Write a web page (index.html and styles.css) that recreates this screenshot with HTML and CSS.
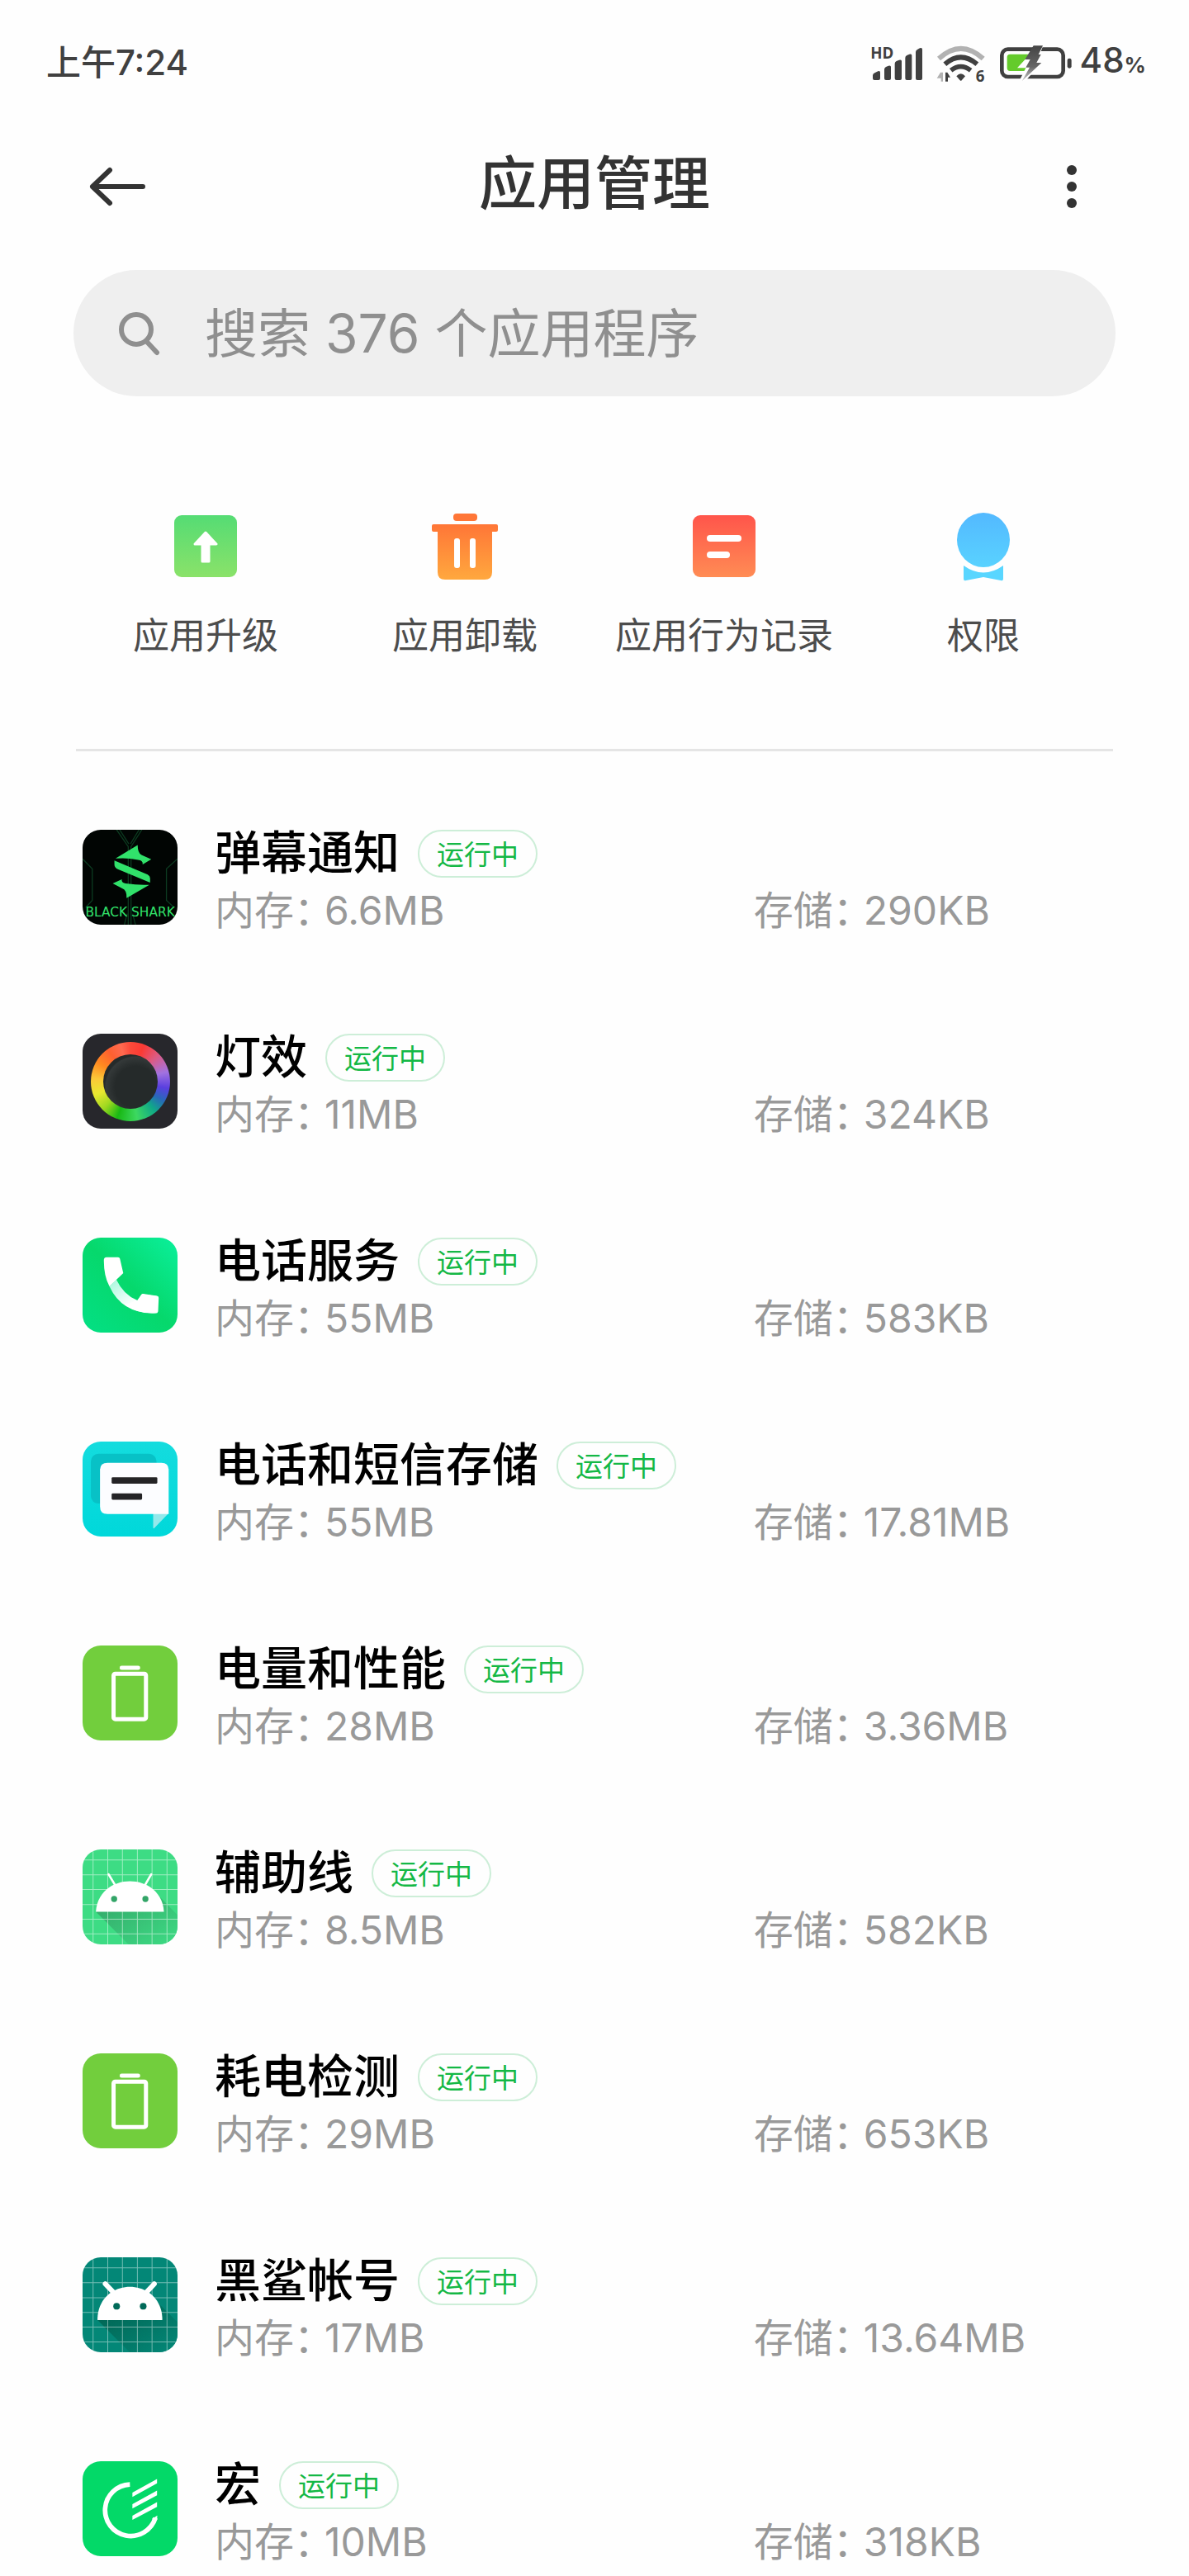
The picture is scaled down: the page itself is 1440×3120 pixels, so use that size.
FILE: index.html
```html
<!DOCTYPE html>
<html lang="zh-CN">
<head>
<meta charset="utf-8">
<meta name="viewport" content="width=device-width, initial-scale=1">
<title>应用管理</title>
<link rel="stylesheet" href="styles.css">
</head>
<body>
<div class="screen">
  <div class="status">
    <span class="clock">上午7:24</span>
    <div class="status-icons">
      <svg class="signal" viewBox="156 93 192 144" aria-hidden="true">
        <text x="157" y="150" font-size="56" font-weight="700" fill="#404040">HD</text>
        <g fill="#404040">
          <path d="M165 211 Q165 205 172 202 L184 196 Q192 193 192 200 V222 Q192 228 186 228 H171 Q165 228 165 222Z"/>
          <path d="M207 189 Q207 183 213 180 L222 176 Q231 173 231 181 V222 Q231 228 225 228 H213 Q207 228 207 222Z"/>
          <path d="M245 168 Q245 162 251 159 L261 155 Q270 152 270 160 V222 Q270 228 264 228 H251 Q245 228 245 222Z"/>
          <path d="M283 147 Q283 141 289 138 L298 134 Q307 131 307 139 V222 Q307 228 301 228 H289 Q283 228 283 222Z"/>
          <path d="M321 126 Q321 120 327 117 L336 112 Q345 109 345 117 V222 Q345 228 339 228 H327 Q321 228 321 222Z"/>
        </g>
      </svg>
      <svg class="wifi" viewBox="393 93 180 144" aria-hidden="true">
        <path d="M402 150 Q482 77 563 150" fill="none" stroke="#b2b2b2" stroke-width="18"/>
        <path d="M424 170 Q482 120 541 170" fill="none" stroke="#404040" stroke-width="18"/>
        <path d="M446 193 Q482 165 518 193" fill="none" stroke="#404040" stroke-width="17"/>
        <path d="M466 214 Q482 196 498 214 L485 229 Q482 232 479 229Z" fill="#404040"/>
        <path d="M408 200 h9 v33 h-7 v-12 h-15Z" fill="#b2b2b2"/>
        <path d="M426 233 v-33 h7 l11 18 h-9 v15Z" fill="#404040"/>
        <text x="536" y="234" font-size="56" font-weight="700" fill="#404040">6</text>
      </svg>
      <svg class="battery" viewBox="624 93 270 144" aria-hidden="true">
        <defs><linearGradient id="bolt" x1="0" y1="0" x2="0" y2="1"><stop offset="0" stop-color="#444"/><stop offset=".6" stop-color="#666"/><stop offset="1" stop-color="#ccc"/></linearGradient></defs>
        <rect x="634" y="116" width="223" height="100" rx="22" fill="none" stroke="#404040" stroke-width="14"/>
        <path d="M664 134 H736 L690 184 H724 L716 195 H664 Q653 195 653 184 V145 Q653 134 664 134Z" fill="#64cb2b"/>
        <path d="M764 100 L784 103 772 134 779 137 766 162 780 164 722 228 708 232 700 226Z" fill="#fff"/>
        <path d="M749 103 H783 L767 135 H776 L760 165 H778 L707 232 L735 182 H721 L737 153 H718Z" fill="url(#bolt)"/>
        <rect x="872" y="149" width="15" height="36" rx="7" fill="#404040"/>
      </svg>
      <span class="charge">48<small>%</small></span>
    </div>
  </div>

  <header class="topbar">
    <button class="icon-btn" type="button" aria-label="返回">
      <svg class="arrow" viewBox="0 0 68 48"><path d="M25 4 L4 24 L25 44 M4 24 H65" fill="none" stroke="#333" stroke-width="6" stroke-linecap="round" stroke-linejoin="round"/></svg>
    </button>
    <h1>应用管理</h1>
    <button class="icon-btn" type="button" aria-label="更多">
      <svg class="dots" viewBox="0 0 12 52" fill="#333"><circle cx="6" cy="6" r="6"/><circle cx="6" cy="26" r="6"/><circle cx="6" cy="46" r="6"/></svg>
    </button>
  </header>

  <label class="search">
    <svg viewBox="0 0 51 54" aria-hidden="true"><circle cx="22" cy="22" r="18" fill="none" stroke="#8f8f8f" stroke-width="6"/><path d="M34 36 L47 50" stroke="#8f8f8f" stroke-width="6" stroke-linecap="round"/></svg>
    <input type="search" placeholder="搜索 376 个应用程序" aria-label="搜索应用程序">
  </label>

  <nav class="actions">
    <button type="button">
      <svg viewBox="0 0 100 100" aria-hidden="true">
        <defs><linearGradient id="up" x1="0" y1="0" x2="0" y2="1"><stop offset="0" stop-color="#55dc74"/><stop offset="1" stop-color="#8ae269"/></linearGradient></defs>
        <rect x="12" y="13" width="76" height="75" rx="9" fill="url(#up)"/>
        <path d="M50 34 L63 48 H54 V69 H46 V48 H37Z" fill="#fff" stroke="#fff" stroke-width="3" stroke-linejoin="round"/>
      </svg>
      应用升级
    </button>
    <button type="button">
      <svg viewBox="0 0 100 100" aria-hidden="true">
        <defs><linearGradient id="bin" x1="0" y1="0" x2="0" y2="1"><stop offset="0" stop-color="#ff7637"/><stop offset="1" stop-color="#ffa83e"/></linearGradient></defs>
        <rect x="36" y="11" width="29" height="9" rx="4" fill="#ff7637"/>
        <path d="M12 24 H88 Q90 24 90 26 V31 Q90 33 88 33 H83 V82 Q83 91 74 91 H26 Q17 91 17 82 V33 H12 Q10 33 10 31 V26 Q10 24 12 24Z" fill="url(#bin)"/>
        <rect x="37" y="41" width="7" height="36" rx="3" fill="#fff"/><rect x="56" y="41" width="7" height="36" rx="3" fill="#fff"/>
      </svg>
      应用卸载
    </button>
    <button type="button">
      <svg viewBox="0 0 100 100" aria-hidden="true">
        <defs><linearGradient id="log" x1="0" y1="0" x2="0" y2="1"><stop offset="0" stop-color="#ff554b"/><stop offset="1" stop-color="#ff8c54"/></linearGradient></defs>
        <rect x="12" y="13" width="76" height="75" rx="9" fill="url(#log)"/>
        <rect x="29" y="37" width="42" height="8" rx="4" fill="#fff"/><rect x="29" y="57" width="28" height="8" rx="4" fill="#fff"/>
      </svg>
      应用行为记录
    </button>
    <button type="button">
      <svg viewBox="0 0 100 100" aria-hidden="true">
        <defs><linearGradient id="perm" x1="0" y1="0" x2="0" y2="1"><stop offset="0" stop-color="#53b9ff"/><stop offset="1" stop-color="#59d2ff"/></linearGradient></defs>
        <ellipse cx="50" cy="43" rx="32" ry="33" fill="url(#perm)"/>
        <path d="M26 74 Q50 91 74 74 V90 Q74 93 71 92 L50 88 L29 92 Q26 93 26 90Z" fill="#59d6ff"/>
      </svg>
      权限
    </button>
  </nav>

  <ul class="apps">
    <li>
      <svg class="app-icon" viewBox="29 47 343 343" aria-hidden="true">
        <rect x="29" y="47" width="343" height="343" fill="#010503"/>
        <g fill="none" stroke="#0c3a20" stroke-width="4"><path d="M152 47 L194 108 V390 M243 47 L204 108 V390 M29 152 L64 188 V302 L40 328 M372 152 L332 188 V302 L360 328 M163 47 L196 98 M233 47 L202 98 M180 390 L190 350 M220 390 L210 350"/></g>
        <path d="M148 151 L228 102 Q228 131 242 138 L277 154 L246 172 Q248 158 230 156 Q190 147 148 151Z M144 158 L264 209 Q273 214 273 222 V238 L158 190 Q144 184 144 172Z M270 246 L188 294 Q190 266 172 259 L138 241 L171 226 Q168 238 184 241 Q230 248 270 246Z" fill="#31e26b"/>
        <text class="brand" x="201" y="359" font-size="46" text-anchor="middle" fill="#31e26b">BLACK SHARK</text>
      </svg>
      <div class="info">
        <div class="title"><h2>弹幕通知</h2><span class="badge">运行中</span></div>
        <p><span class="key">内存：</span><span class="value">6.6MB</span></p><p><span class="key">存储：</span><span class="value">290KB</span></p>
      </div>
    </li>
    <li>
      <div class="app-icon lamp"><div class="ring"><div class="knob"></div></div></div>
      <div class="info">
        <div class="title"><h2>灯效</h2><span class="badge">运行中</span></div>
        <p><span class="key">内存：</span><span class="value">11MB</span></p><p><span class="key">存储：</span><span class="value">324KB</span></p>
      </div>
    </li>
    <li>
      <svg class="app-icon" viewBox="60 58 343 343" aria-hidden="true">
        <defs>
          <linearGradient id="call" x1="1" y1="0" x2="0" y2="1"><stop offset="0" stop-color="#0af09c"/><stop offset=".5" stop-color="#06d86c"/><stop offset="1" stop-color="#03e085"/></linearGradient>
          <linearGradient id="cord" x1="0" y1="0" x2="1" y2="1"><stop offset="0" stop-color="#a4f8dc"/><stop offset=".6" stop-color="#fff"/></linearGradient>
        </defs>
        <rect x="60" y="58" width="343" height="343" fill="url(#call)"/>
        <path d="M182 209 Q207 263 258 285 L276 262 L332 270 L330 330 Q205 338 157 234Z" fill="url(#cord)"/>
        <path d="M146 129 H188 Q194 129 195 134 L207 186 L157 234 Q136 196 137 138 Q138 129 146 129Z" fill="#fff"/>
        <path d="M279 261 L328 268 Q335 269 335 276 L333 322 Q333 330 325 330 Q265 336 214 301 L258 285 L272 264 Q275 260 279 261Z" fill="#fff"/>
      </svg>
      <div class="info">
        <div class="title"><h2>电话服务</h2><span class="badge">运行中</span></div>
        <p><span class="key">内存：</span><span class="value">55MB</span></p><p><span class="key">存储：</span><span class="value">583KB</span></p>
      </div>
    </li>
    <li>
      <svg class="app-icon" viewBox="60 799 343 343" aria-hidden="true">
        <defs><linearGradient id="sms" x1="0" y1="0" x2="0" y2="1"><stop offset="0" stop-color="#14dcde"/><stop offset="1" stop-color="#00d8da"/></linearGradient></defs>
        <rect x="60" y="799" width="343" height="343" fill="url(#sms)"/>
        <rect x="90" y="843" width="237" height="180" rx="27" fill="#08c1c6"/>
        <path d="M315 1058 H371 L320 1111 Q315 1116 315 1109Z" fill="#93e9eb"/>
        <path d="M150 876 H345 Q371 876 371 902 V1061 H150 Q123 1061 123 1034 V902 Q123 876 150 876Z" fill="#fcfdff"/>
        <rect x="165" y="928" width="165" height="23" rx="4" fill="#242426"/><rect x="165" y="986" width="110" height="23" rx="4" fill="#242426"/>
      </svg>
      <div class="info">
        <div class="title"><h2>电话和短信存储</h2><span class="badge">运行中</span></div>
        <p><span class="key">内存：</span><span class="value">55MB</span></p><p><span class="key">存储：</span><span class="value">17.81MB</span></p>
      </div>
    </li>
    <li>
      <svg class="app-icon" viewBox="60 71 343 343" aria-hidden="true">
        <rect x="60" y="71" width="343" height="343" fill="#72ce3d"/>
        <rect x="194" y="144" width="74" height="15" rx="7" fill="#fff"/>
        <rect x="172" y="173" width="117" height="164" rx="6" fill="none" stroke="#fff" stroke-width="15"/>
      </svg>
      <div class="info">
        <div class="title"><h2>电量和性能</h2><span class="badge">运行中</span></div>
        <p><span class="key">内存：</span><span class="value">28MB</span></p><p><span class="key">存储：</span><span class="value">3.36MB</span></p>
      </div>
    </li>
    <li>
      <svg class="app-icon" viewBox="60 812 343 343" aria-hidden="true">
        <defs><linearGradient id="shade1" x1="0" y1="0" x2="1" y2="1"><stop offset="0" stop-color="#33a568"/><stop offset="1" stop-color="#3ddc84"/></linearGradient></defs>
        <rect x="60" y="812" width="343" height="343" fill="#3ddc84"/>
        <path d="M108 1037 L226 1155 H403 V1049 L340 984Z" fill="url(#shade1)"/>
        <path d="M98 812V1155M151 812V1155M204 812V1155M258 812V1155M311 812V1155M365 812V1155M60 850H403M60 904H403M60 957H403M60 1011H403M60 1064H403M60 1117H403" stroke="#fff" stroke-opacity=".5" stroke-width="3"/>
        <path d="M154 902 L177 940 M308 902 L286 940" stroke="#fff" stroke-width="8" stroke-linecap="round"/>
        <path d="M108 1037 C118 890 344 890 354 1037Z" fill="#fff"/>
        <circle cx="174" cy="991" r="11" fill="#33a568"/><circle cx="287" cy="991" r="11" fill="#33a568"/>
      </svg>
      <div class="info">
        <div class="title"><h2>辅助线</h2><span class="badge">运行中</span></div>
        <p><span class="key">内存：</span><span class="value">8.5MB</span></p><p><span class="key">存储：</span><span class="value">582KB</span></p>
      </div>
    </li>
    <li>
      <svg class="app-icon" viewBox="60 71 343 343" aria-hidden="true">
        <rect x="60" y="71" width="343" height="343" fill="#72ce3d"/>
        <rect x="194" y="144" width="74" height="15" rx="7" fill="#fff"/>
        <rect x="172" y="173" width="117" height="164" rx="6" fill="none" stroke="#fff" stroke-width="15"/>
      </svg>
      <div class="info">
        <div class="title"><h2>耗电检测</h2><span class="badge">运行中</span></div>
        <p><span class="key">内存：</span><span class="value">29MB</span></p><p><span class="key">存储：</span><span class="value">653KB</span></p>
      </div>
    </li>
    <li>
      <svg class="app-icon" viewBox="60 793 343 343" aria-hidden="true">
        <defs><linearGradient id="shade2" x1="0" y1="0" x2="1" y2="1"><stop offset="0" stop-color="#01614f"/><stop offset="1" stop-color="#038878"/></linearGradient></defs>
        <rect x="60" y="793" width="343" height="343" fill="#038777"/>
        <path d="M114 1020 L230 1136 H403 V1028 L335 960Z" fill="url(#shade2)"/>
        <path d="M98 793V1136M151 793V1136M204 793V1136M258 793V1136M311 793V1136M365 793V1136M60 831H403M60 885H403M60 939H403M60 992H403M60 1045H403M60 1099H403" stroke="#fff" stroke-opacity=".45" stroke-width="3"/>
        <path d="M142 889 L172 920 M319 889 L290 920" stroke="#fff" stroke-width="18" stroke-linecap="round"/>
        <path d="M114 1020 V1012 C122 862 340 862 348 1012 V1020Z" fill="#fff"/>
        <circle cx="183" cy="970" r="12" fill="#016a59"/><circle cx="279" cy="970" r="12" fill="#016a59"/>
      </svg>
      <div class="info">
        <div class="title"><h2>黑鲨帐号</h2><span class="badge">运行中</span></div>
        <p><span class="key">内存：</span><span class="value">17MB</span></p><p><span class="key">存储：</span><span class="value">13.64MB</span></p>
      </div>
    </li>
    <li>
      <svg class="app-icon" viewBox="0 0 343 343" aria-hidden="true">
        <rect width="343" height="343" fill="#03d968"/>
        <path d="M171 84 A93 93 0 1 0 263 205" fill="none" stroke="#fff" stroke-width="17"/>
        <path d="M180 113 L269 64 V80 L180 129Z M180 155 L269 106 V123 L180 171Z M180 197 L269 148 V165 L180 212Z M250 209 L270 196 L269 212Z" fill="#fff"/>
      </svg>
      <div class="info">
        <div class="title"><h2>宏</h2><span class="badge">运行中</span></div>
        <p><span class="key">内存：</span><span class="value">10MB</span></p><p><span class="key">存储：</span><span class="value">318KB</span></p>
      </div>
    </li>
  </ul>
</div>
</body>
</html>
```
FILE: styles.css
```css
* { box-sizing: border-box; margin: 0; padding: 0; }

body {
  background: #fefefe;
  color: #333;
  font-family: "Noto Sans CJK SC", "Noto Sans", sans-serif;
}

button {
  border: 0;
  background: none;
  font: inherit;
  color: inherit;
  cursor: pointer;
}

svg { display: block; flex: none; }

.screen {
  display: flex;
  flex-direction: column;
  height: 100vh;
  overflow: hidden;
}

/* Status bar */
.status {
  flex: none;
  display: flex;
  justify-content: space-between;
  align-items: center;
  height: 148px;
  padding: 4px 52px 0 56px;
  color: #404040;
  font-family: Inter, "Noto Sans CJK SC", sans-serif;
  font-size: 42px;
  font-weight: 500;
  line-height: 60px;
}
.status-icons { display: flex; align-items: center; gap: 16px; }
.status-icons svg { height: 48px; overflow: visible; font-family: "Open Sans", sans-serif; }
.signal { width: 64px; }
.wifi { width: 60px; }
.battery { width: 90px; }
.charge { margin-left: -8px; }
.charge small { font-size: 26px; font-weight: 700; }

/* Title bar */
.topbar {
  flex: none;
  display: flex;
  justify-content: space-between;
  align-items: center;
  height: 155px;
  padding: 0 92px;
}
.topbar h1 {
  padding-bottom: 16px;
  font-size: 70px;
  font-weight: 500;
  line-height: 100px;
}
.icon-btn {
  display: grid;
  place-items: center;
  width: 100px;
  height: 100px;
}
.arrow { width: 68px; height: 48px; }
.dots { width: 12px; height: 52px; }

/* Search */
.search {
  flex: none;
  display: flex;
  align-items: center;
  gap: 54px;
  height: 153px;
  margin: 24px 89px 0;
  padding: 0 54px;
  border-radius: 77px;
  background: #efefef;
}
.search svg { width: 51px; height: 54px; }
.search input {
  flex: 1;
  min-width: 0;
  height: 100px;
  border: 0;
  outline: 0;
  background: none;
  color: #333;
  font-family: Inter, "Noto Sans CJK SC", sans-serif;
  font-size: 64px;
}
.search input::placeholder { color: #8f8f8f; opacity: 1; }

/* Shortcuts */
.actions {
  flex: none;
  display: grid;
  grid-template-columns: repeat(4, 1fr);
  margin: 0 92px;
  padding: 131px 0 110px;
  border-bottom: 3px solid #e5e5e5;
}
.actions button {
  display: flex;
  flex-direction: column;
  align-items: center;
  gap: 26px;
  color: #4c4c4c;
  font-size: 44px;
  line-height: 60px;
  white-space: nowrap;
}
.actions svg { width: 100px; height: 100px; }

/* App list */
.apps {
  flex: 1;
  min-height: 0;
  overflow-y: auto;
  scrollbar-width: none;
  list-style: none;
  padding: 29px 92px 0 100px;
}
.apps li {
  display: flex;
  align-items: center;
  gap: 45px;
  height: 247px;
}
.app-icon {
  flex: none;
  width: 115px;
  height: 115px;
  border-radius: 22px;
  overflow: hidden;
}
.brand { font-family: "DejaVu Sans", sans-serif; }
.info {
  flex: 1;
  display: grid;
  grid-template-columns: 3fr 2fr;
  grid-template-rows: 72px 68px;
}
.title {
  grid-column: 1 / -1;
  display: flex;
  align-items: flex-end;
  gap: 22px;
}
.title h2 {
  color: #000;
  font-size: 56px;
  font-weight: 500;
  line-height: 72px;
}
.badge {
  height: 58px;
  margin-bottom: 2px;
  padding: 0 21px;
  border: 2px solid #cdeed8;
  border-radius: 29px;
  color: #14b845;
  font-size: 33px;
  line-height: 52px;
}
.info p {
  display: flex;
  align-items: baseline;
  gap: 13px;
  color: #999;
  font-size: 48px;
  line-height: 68px;
  white-space: nowrap;
}
/* half-width colon after the label */
.key { font-feature-settings: "halt"; }
.value { font-family: Inter, "Noto Sans CJK SC", sans-serif; }

.lamp, .ring { display: grid; place-items: center; }
.lamp { background: #27272c; }
.ring {
  width: 96px;
  height: 96px;
  border-radius: 50%;
  background: conic-gradient(#fb4a3a, #fb3a34 20deg, #dd5a80 45deg, #a272e0 75deg, #5a3fe0 100deg, #2868b8 120deg, #10a888 140deg, #3dd860 170deg, #18b814 200deg, #9fd820 225deg, #e8e830 250deg, #fbc838 275deg, #ff8a20 300deg, #ff6030 325deg, #ff6a50 345deg, #fb4a3a);
}
.knob {
  width: 66px;
  height: 66px;
  border-radius: 50%;
  background: radial-gradient(circle at 60% 60%, #252a2a 45%, #343939 65%, #252a2a 68%);
}
```
